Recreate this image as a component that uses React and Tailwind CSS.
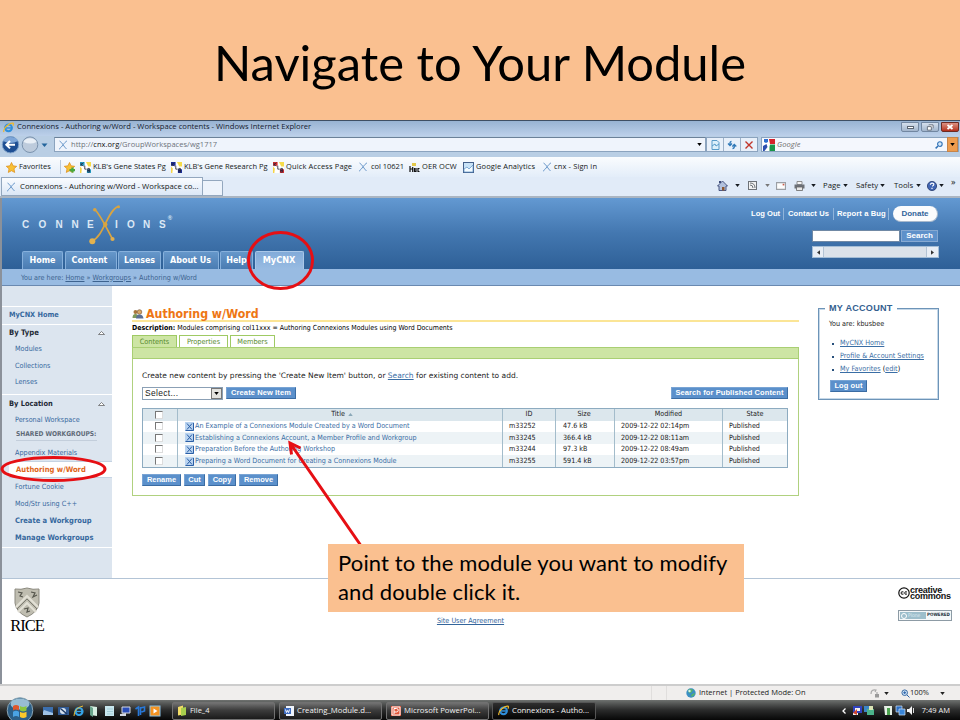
import React from "react";

function Arrow({ className = "" }) {
  return (
    <svg viewBox="0 0 6 4" className={"h-[3px] w-[5px] shrink-0 " + className}>
      <path d="M0 0h6L3 4z" fill="currentColor" />
    </svg>
  );
}

function IeIcon({ className = "" }) {
  return (
    <svg viewBox="0 0 12 12" className={"shrink-0 " + className}>
      <circle cx="6" cy="6.4" r="3.7" fill="none" stroke="#2f8fdc" strokeWidth="2.2" />
      <path d="M3 6.5h7" stroke="#2f8fdc" strokeWidth="1.6" />
      <path d="M1 11C-.5 7 7 .5 11 1.3c.8.6.3 1.8-.3 2.600" fill="none" stroke="#efb92c" strokeWidth="1.3" />
    </svg>
  );
}

function MiniX({ className = "" }) {
  return (
    <svg viewBox="0 0 10 10" className={"h-[10px] w-[10px] shrink-0 " + className}>
      <path d="M1.500 1C4 2 6 7 8.500 9M9 .8C6 2.500 4 7 1 9.300" fill="none" stroke="#6d9acb" strokeWidth="1" />
    </svg>
  );
}

function Star({ plus }) {
  return (
    <svg viewBox="0 0 12 12" className="h-[11px] w-[11px] shrink-0">
      <path d="M6 .5l1.700 3.700 4 .5-3 2.700.8 4L6 9.500l-3.500 1.900.8-4-3-2.700 4-.5z" fill="#f8c135" stroke="#dd8d1c" strokeWidth=".8" />
      {plus && <path d="M6 7.500h2V6h2.500v1.500H12V10h-1.500v1.500H8V10H6z" fill="#4aa83c" />}
    </svg>
  );
}

function Klb({ color }) {
  return (
    <svg viewBox="0 0 12 12" className="h-[11px] w-[11px] shrink-0">
      <rect width="12" height="12" fill="#fff" />
      <path d="M0 0h5v4H0zM7.500 8H12v4H7.500z" fill={color} />
      <path d="M6.500 0h5.500v5H9z" fill="#f6dc4a" />
      <path d="M0 5l2 2-.5 5H0z" fill="#f6d548" />
      <path d="M1.200 .8v3.700M3.800.8L1.500 2.700 3.800 4.500M5.200 4v3.800h2M8.500 7v4h2V9h-2 1.800V7z" fill="none" stroke="#23233c" strokeWidth=".9" />
    </svg>
  );
}

function TitleBar() {
  return (
    <div className="flex h-[16px] items-center border-t border-[#3f4f63] bg-linear-to-b from-[#98b3d2] to-[#bcd0ea] pl-[3px] text-[7.65px] text-[#15202e]">
      <IeIcon className="mb-[2px] h-[11px] w-[11px]" />
      <span className="mb-[3px] ml-[3px] grow whitespace-nowrap">Connexions - Authoring w/Word - Workspace contents - Windows Internet Explorer</span>
      <div className="mb-[3px] flex h-[10px] gap-[2px] pr-px">
        <div className="flex w-[18px] items-center justify-center rounded-b-[2px] border border-[#7287a1] bg-linear-to-b from-[#d5e0ed] to-[#a2b5cc]">
          <div className="h-[3px] w-[7px] border border-[#5b6572] bg-white" />
        </div>
        <div className="flex w-[18px] items-center justify-center rounded-b-[2px] border border-[#7287a1] bg-linear-to-b from-[#d5e0ed] to-[#a2b5cc]">
          <svg viewBox="0 0 8 8" className="h-[7px] w-[8px]">
            <path d="M2.500 1h5v4M1 3h4.500v4H1z" fill="#fff" stroke="#5b6572" />
          </svg>
        </div>
        <div className="flex w-[18px] items-center justify-center rounded-b-[2px] border border-[#6e2a22] bg-linear-to-b from-[#dc9082] to-[#b42d18]">
          <svg viewBox="0 0 8 6" className="h-[6px] w-[8px]">
            <path d="M1.500 1l5 4M6.500 1l-5 4" stroke="#fff" strokeWidth="1.800" />
          </svg>
        </div>
      </div>
    </div>
  );
}

function AddressBar() {
  return (
    <div className="flex h-[21px] items-center bg-[#b9cee4] pb-[4px] text-[7.5px]">
      <svg viewBox="0 0 50 18" className="h-[18px] w-[50px] shrink-0">
        <circle cx="10.500" cy="8.700" r="8.200" fill="#1f4f93" stroke="#7da0c8" />
        <path d="M3 5a8 6 0 0 1 15 0q-7 4-15 0" fill="#7ea6d8" />
        <path d="M15 8.700H7M10 5L6.300 8.700 10 12.400" fill="none" stroke="#fff" strokeWidth="2" />
        <circle cx="30" cy="8.700" r="7.800" fill="#bdcbdc" stroke="#7b93ae" />
        <path d="M23.500 6a7 6 0 0 1 13 0q-6 3-13 0" fill="#e9eff6" />
        <path d="M41.500 7.500h6l-3 3.500z" fill="#24659c" />
      </svg>
      <div className="ml-[4px] flex h-[15px] w-[652px] shrink-0 items-center border border-[#8ba3be] border-t-[#6b8199] bg-[#eff4fc]">
        <MiniX className="ml-[3px]" />
        <span className="ml-[3px] grow tracking-[0.04px] whitespace-nowrap text-[#6d737b]">http://<span className="text-[#111]">cnx.org</span>/GroupWorkspaces/wg1717</span>
        <Arrow className="mr-[3px] text-black" />
      </div>
      {/* compatibility view, refresh and stop buttons */}
      <div className="flex h-[15px] w-[52px] shrink-0 border border-[#8ba3be] bg-[#e8f0fa]">
        <div className="flex w-[17px] items-center justify-center border-r border-[#9eb2c9]">
          <svg viewBox="0 0 9 10" className="h-[10px] w-[9px]">
            <path d="M1 .5h5l2 2v7H1z" fill="#dcf0fb" stroke="#589bc8" />
            <path d="M1 6l3-2 1 2 3-2" fill="none" stroke="#589bc8" />
          </svg>
        </div>
        <div className="flex w-[17px] items-center justify-center border-r border-[#9eb2c9]">
          <svg viewBox="0 0 10 10" className="h-[10px] w-[10px]">
            <path d="M4.500 1.500Q3 1.500 3 3v2M1 3.500l2 2 2-2M5.500 8.500q1.800 0 1.800-2V5M5.300 6.500l2-2 2 2" fill="none" stroke="#2e78b8" strokeWidth="1.300" />
          </svg>
        </div>
        <div className="flex grow items-center justify-center">
          <svg viewBox="0 0 8 8" className="h-[8px] w-[8px]">
            <path d="M.5.5l7 7M7.500.5l-7 7" stroke="#c1352b" strokeWidth="1.400" />
          </svg>
        </div>
      </div>
      <div className="ml-[3px] flex h-[15px] w-[198px] items-center border border-[#8ba3be] bg-[#f4f7fd]">
        <svg viewBox="0 0 12 12" className="ml-px h-[12px] w-[12px]">
          <rect width="12" height="12" fill="#fff" />
          <path d="M1 0h4v3L3 4 1 3z" fill="#2d6fd0" />
          <path d="M6 0h6v5H7z" fill="#d3222a" />
          <path d="M7 5.500h5V12H6.500V8z" fill="#18954a" />
          <path d="M0 7l3.500-2 1 3-3 4H0z" fill="#2d4fb0" />
        </svg>
        <span className="ml-[2px] grow text-[7.5px] tracking-[0.1px] text-[#6e6e6e] italic">Google</span>
        <svg viewBox="0 0 9 9" className="mr-[4px] h-[8px] w-[8px]">
          <circle cx="5.500" cy="3.500" r="2.600" fill="#d5e8fa" stroke="#2f71b5" strokeWidth="1.200" />
          <path d="M3.500 5.500L.7 8.300" stroke="#2f71b5" strokeWidth="1.600" />
        </svg>
        <div className="flex h-[15px] w-[11px] items-center justify-center border border-[#c78448] bg-[#ee9c4e]">
          <Arrow className="text-black" />
        </div>
      </div>
    </div>
  );
}

function Favorites() {
  return (
    <div className="flex h-[20px] items-center bg-linear-to-b from-[#fafcfe] to-[#e3edf9] pl-[6px] text-[7.5px] whitespace-nowrap text-[#161a20]">
      <Star />
      <span className="ml-[2px] w-[41px]">Favorites</span>
      <div className="mr-[3px] h-[14px] w-px bg-[#b9c9dc]" />
      <Star plus />
      <div className="ml-[5px] flex w-[91px] items-center gap-[2px]"><Klb color="#24a0c8" /><span>KLB's Gene States Pg</span></div>
      <div className="flex w-[102px] items-center gap-[2px]"><Klb color="#1c2f9c" /><span>KLB's Gene Research Pg</span></div>
      <div className="flex w-[85px] items-center gap-[2px]"><Klb color="#d93030" /><span className="tracking-[0.13px]">Quick Access Page</span></div>
      <div className="flex w-[51px] items-center"><MiniX /><span className="ml-[3px] tracking-[-0.05px]">col 10621</span></div>
      <div className="flex w-[54px] items-center">
        <svg viewBox="0 0 11 9" className="h-[9px] w-[11px] shrink-0">
          <path d="M3 0h4v3H3z" fill="#e3c94b" />
          <path d="M1 3v6M1 6h2.500M3.700 4v5M5.500 5v3.500h1.500V5M10.500 5.500H9V8.500h1.500" fill="none" stroke="#111" strokeWidth="1.200" />
        </svg>
        <span className="ml-[2px] tracking-[0.1px]">OER OCW</span>
      </div>
      <div className="flex w-[79px] items-center">
        <svg viewBox="0 0 11 11" className="h-[11px] w-[11px] shrink-0">
          <rect x=".5" y=".5" width="10" height="10" fill="#c9e3f7" stroke="#44608a" />
          <path d="M1 7l3-2 2 2 4-4v7H1z" fill="#f4fbff" stroke="#5a8fc4" strokeWidth=".7" />
        </svg>
        <span className="ml-[2px] tracking-[0.1px]">Google Analytics</span>
      </div>
      <MiniX />
      <span className="ml-[2px] tracking-[0.12px]">cnx - Sign in</span>
    </div>
  );
}

function TabRow() {
  return (
    <div className="flex h-[21px] items-center border-b-2 border-[#aab5c2] bg-[#e1ebf8] text-[7.5px] whitespace-nowrap text-[#161a20]">
      <div className="ml-px flex h-[19px] w-[202px] items-center border border-[#93a7be] bg-linear-to-b from-[#fafcff] to-[#dbe7f6] pl-[4px]">
        <MiniX />
        <span className="ml-[4px] text-[7.75px]">Connexions - Authoring w/Word - Workspace co...</span>
      </div>
      <div className="mt-[3px] h-[16px] w-[20px] rounded-tr-[2px] border border-l-0 border-[#93a7be] bg-[#edf3fb]" />
      <div className="flex grow items-center pb-[2px] pl-[494px]">
        <svg viewBox="0 0 11 11" className="h-[11px] w-[11px]">
          <path d="M.5 6L5.500 1l5 5H9v4.500H2V6z" fill="#b2c1dd" stroke="#3c4a78" strokeWidth=".9" />
          <path d="M2 1h2v2H2z" fill="#3c4a78" />
          <path d="M5 7h2.500v3.500H5z" fill="#8c5730" />
        </svg>
        <Arrow className="ml-[7px]" />
        <svg viewBox="0 0 9 9" className="ml-[8px] h-[9px] w-[9px]">
          <rect x=".5" y=".5" width="8" height="8" fill="#f1f1f1" stroke="#6d7278" />
          <path d="M2 4q3 0 3 3M2 2q5 0 5 5" fill="none" stroke="#6d7278" />
        </svg>
        <Arrow className="ml-[8px] text-[#777]" />
        <svg viewBox="0 0 9 7" className="ml-[6px] h-[8px] w-[10px]">
          <path d="M.5.5h8v6h-8z" fill="#fdfdfd" stroke="#9b9fa5" />
          <path d="M6 1.500h1.500V3H6z" fill="#c85b4a" />
        </svg>
        <svg viewBox="0 0 11 10" className="ml-[8px] h-[10px] w-[11px]">
          <path d="M3 .5h5v3H3z" fill="#f5f5f5" stroke="#777" strokeWidth=".8" />
          <path d="M.5 3.500h10v4H.5z" fill="#6c7077" />
          <path d="M2.500 6h6v3.500h-6z" fill="#e8e8e8" stroke="#666" strokeWidth=".8" />
        </svg>
        <Arrow className="ml-[6px]" />
        <span className="ml-[7px] w-[20px] text-[7.75px]">Page</span><Arrow />
        <span className="ml-[8px] w-[24px] text-[7.75px]">Safety</span><Arrow />
        <span className="ml-[9px] w-[22px] text-[7.75px]">Tools</span><Arrow />
        <svg viewBox="0 0 10 10" className="ml-[6px] h-[10px] w-[10px]">
          <circle cx="5" cy="5" r="4.600" fill="#4166b4" stroke="#25396b" strokeWidth=".8" />
          <path d="M3.400 3.800q0-1.600 1.700-1.600t1.700 1.300q0 1.100-1.700 1.800M5 6.800v1.200" fill="none" stroke="#fff" strokeWidth="1.200" />
        </svg>
        <Arrow className="ml-[2px]" />
        <span className="mb-[9px] ml-[7px] text-[9px] leading-[9px]">»</span>
      </div>
    </div>
  );
}

const navTab = "flex h-[18px] items-center justify-center rounded-t-[2px] border-x border-t border-[#86b0dc] bg-linear-to-b from-[#6697ca] to-[#4a7cb2] ";

function SiteHeader() {
  return (
    <div className="flex h-[71px] justify-between bg-linear-to-b from-[#6399d2] via-[#4377b0] via-50% to-[#2e6097] font-['DejaVu_Sans',sans-serif] whitespace-nowrap text-white">
      <div className="flex flex-col pl-[20px]">
        <div className="flex h-[53px] items-center font-['Liberation_Sans',sans-serif] text-[10px] font-bold text-[#dce8f5]">
          <span className="w-[16.500px]">C</span>
          <span className="w-[17px]">O</span>
          <span className="w-[16px]">N</span>
          <span className="w-[15.500px]">N</span>
          <span className="w-[2px]">E</span>
          <svg viewBox="0 0 34 40" className="h-[40px] w-[34px]">
            <path d="M6 4.500C12 11 17 22 23.500 34M29 1.500C18 6 15 31 3 36" fill="none" stroke="#d9a440" strokeWidth="1.700" />
            <circle cx="5.800" cy="4.700" r="1.800" fill="#d9a440" />
            <circle cx="29.500" cy="1.800" r="1.500" fill="#d9a440" />
            <circle cx="23.500" cy="34" r="2.100" fill="#e0ad4c" />
            <circle cx="3.300" cy="36.300" r="3" fill="#e3b24e" />
            <circle cx="16.300" cy="19.500" r="2.200" fill="#d9a440" />
          </svg>
          <span className="-ml-[8px] w-[12px]">I</span>
          <span className="w-[16px]">O</span>
          <span className="w-[16px]">N</span>
          <span>S</span>
          <span className="mb-[12px] ml-[2px] text-[6px]">®</span>
        </div>
        <div className="flex h-[18px] gap-[1.5px] text-[8px] font-bold">
          <div className={navTab + "w-[41px]"}>Home</div>
          <div className={navTab + "w-[52px] pr-[2px]"}>Content</div>
          <div className={navTab + "w-[43px]"}>Lenses</div>
          <div className={navTab + "w-[56px]"}>About Us</div>
          <div className={navTab + "w-[33px]"}>Help</div>
          <div className="flex h-[18px] w-[49px] items-center justify-center rounded-t-[2px] border-x border-t border-[#a9c7e8] bg-linear-to-b from-[#82abd9] to-[#98bbe2] text-[8.2px]">MyCNX</div>
        </div>
      </div>
      <div className="flex w-[209px] flex-col pt-[8px] font-['Liberation_Sans',sans-serif] text-[7.6px] font-bold">
        <div className="flex h-[16px] items-center">
          <span className="w-[33px] border-r border-[#8fb4db]">Log Out</span>
          <span className="w-[50px] border-r border-[#8fb4db] pl-[4px] tracking-[0.1px]">Contact Us</span>
          <span className="w-[55px] border-r border-[#8fb4db] pl-[3px] tracking-[0.08px]">Report a Bug</span>
          <div className="ml-[4px] flex h-[16px] w-[45px] items-center justify-center rounded-full border-r border-b border-[#a8b9cd] bg-[#fbfcfd] text-[8px] text-[#33659b]">Donate</div>
        </div>
        <div className="mt-[8px] ml-[61px] flex h-[12px]">
          <div className="w-[88px] border border-[#7089a5] bg-white" />
          <div className="ml-px flex w-[37px] items-center justify-center border border-[#86a9d2] bg-[#5e91ca] text-[8px]">Search</div>
        </div>
        <div className="mt-[4px] ml-[61px] flex h-[12px] w-[127px] items-center justify-between border border-[#a3bdd6] bg-[#dbe2ea] text-[#333]">
          <div className="flex h-full w-[11px] items-center justify-center border-r border-[#b2c3d4] bg-[#e8eef5]"><Arrow className="rotate-90" /></div>
          <div className="flex h-full w-[12px] items-center justify-center border-l border-[#b2c3d4] bg-[#e8eef5]"><Arrow className="-rotate-90" /></div>
        </div>
      </div>
    </div>
  );
}

function Sidebar() {
  const link = "flex items-center pl-[13px] ";
  return (
    <div className="flex w-[110px] shrink-0 flex-col bg-[#dce5ef] text-[7.2px] whitespace-nowrap text-[#36689e]">
      <div className="h-[20px]" />
      <div className="flex h-[18px] items-center border-t border-white pl-[7px] text-[7.3px] font-bold">MyCNX Home</div>
      <div className="flex h-[17px] items-center justify-between border-t border-white pr-[7px] pl-[7px] text-[7.6px] font-bold text-[#1f2a36]">
        By Type
        <svg viewBox="0 0 7 4" className="h-[4px] w-[7px]"><path d="M.5 3.500h6l-3-3z" fill="#fff" stroke="#555" strokeWidth=".7" /></svg>
      </div>
      <div className={link + "h-[17px]"}>Modules</div>
      <div className={link + "h-[16px]"}>Collections</div>
      <div className={link + "h-[16px]"}>Lenses</div>
      <div className="mt-[4px] flex h-[18px] items-center justify-between border-t border-white pr-[7px] pl-[7px] text-[7.4px] font-bold text-[#1f2a36]">
        By Location
        <svg viewBox="0 0 7 4" className="h-[4px] w-[7px]"><path d="M.5 3.500h6l-3-3z" fill="#fff" stroke="#555" strokeWidth=".7" /></svg>
      </div>
      <div className={link + "h-[16px]"}>Personal Workspace</div>
      <div className="ml-[14px] flex h-[13px] w-[81px] items-center border-b border-[#c3cedb] pt-[2px] text-[6.6px] font-bold text-[#5e6a77]">SHARED WORKGROUPS:</div>
      <div className={link + "h-[20px] pt-[4px]"}>Appendix Materials</div>
      <div className="ml-[7px] flex h-[17px] items-center border-y border-[#c5d3e2] bg-white pl-[7px] text-[7.6px] font-bold text-[#e0661a]">Authoring w/Word</div>
      <div className={link + "h-[18px] pt-px"}>Fortune Cookie</div>
      <div className={link + "h-[16px] pt-px"}>Mod/Str using C++</div>
      <div className={link + "h-[17px] text-[7.5px] font-bold"}>Create a Workgroup</div>
      <div className={link + "h-[16px] pt-px text-[7.5px] font-bold"}>Manage Workgroups</div>
      <div className="mt-[2px] border-t border-white" />
    </div>
  );
}

const rows = [
  ["An Example of a Connexions Module Created by a Word Document", "m33252", "47.6 kB", "2009-12-22 02:14pm"],
  ["Establishing a Connexions Account, a Member Profile and Workgroup", "m33245", "366.4 kB", "2009-12-22 08:11am"],
  ["Preparation Before the Authoring Workshop", "m33244", "97.3 kB", "2009-12-22 08:49am"],
  ["Preparing a Word Document for Creating a Connexions Module", "m33255", "591.4 kB", "2009-12-22 03:57pm"],
];

function Check() {
  return <div className="ml-[12px] h-[8px] w-[8px] border border-[#dcdcdc] border-t-[#777] border-l-[#777] bg-white" />;
}

const cols = "grid grid-cols-[34px_325px_53px_59px_108px_65px] ";
const cell = "flex items-center border-l border-[#a3bccb] ";
const btn = "flex h-[12px] items-center justify-center border border-[#79a4d4] border-r-[#3b6ca3] border-b-[#3b6ca3] bg-[#5b90cb] font-['Liberation_Sans',sans-serif] text-[7.5px] font-bold text-white ";

function ContentTable() {
  return (
    <div className="mt-[8px] w-[646px] border border-[#8dabc0] text-[7.15px]">
      <div className={cols + "h-[11.500px] bg-[#dce7ed] text-[#222]"}>
        <div className="flex items-center"><Check /></div>
        <div className={cell + "justify-center gap-[3px] pl-[4px]"}>Title <Arrow className="rotate-180 text-[#8aa8b8]" /></div>
        <div className={cell + "justify-center"}>ID</div>
        <div className={cell + "justify-center pr-[2px]"}>Size</div>
        <div className={cell + "justify-center"}>Modified</div>
        <div className={cell + "justify-center"}>State</div>
      </div>
      {rows.map((r, i) => (
        <div key={r[1]} className={cols + "h-[11.600px] text-[#1a1a1a] " + (i % 2 ? "bg-[#edf3f6]" : "bg-white")}>
          <div className="flex items-center"><Check /></div>
          <div className={cell + "pl-[7px] text-[#3a6ea5]"}>
            <svg viewBox="0 0 9 9" className="mr-px h-[9px] w-[9px] shrink-0">
              <rect width="9" height="9" fill="#b9d3f0" />
              <path d="M2 1.500l5 6M7 1.500l-5 6M.5 8.500h8V1" fill="none" stroke="#2b5fa6" />
            </svg>
            <span>{r[0]}</span>
          </div>
          <div className={cell + "pl-[6px]"}>{r[1]}</div>
          <div className={cell + "pl-[7px]"}>{r[2]}</div>
          <div className={cell + "pl-[6px]"}>{r[3]}</div>
          <div className={cell + "pl-[6px]"}>Published</div>
        </div>
      ))}
    </div>
  );
}

function Workspace() {
  return (
    <div className="ml-[20px] flex w-[667px] shrink-0 flex-col whitespace-nowrap">
      <div className="flex h-[36px] items-end border-b-2 border-[#fbe596]">
        <svg viewBox="0 0 12 10" className="mb-px h-[10px] w-[12px]">
          <circle cx="3.500" cy="3" r="2" fill="#a8763c" />
          <path d="M.5 9q0-4 3-4t3 4z" fill="#7f9a5c" />
          <circle cx="7.500" cy="3" r="2.300" fill="#d8a868" stroke="#6d4a28" strokeWidth=".6" />
          <path d="M4 9.500q0-4 3.500-4t4 4z" fill="#5b6f94" />
        </svg>
        <h1 className="ml-[2px] text-[12.25px] leading-[12px] font-bold text-[#ee7614]">Authoring w/Word</h1>
      </div>
      <p className="h-[13px] text-[7px] leading-[13px] text-black"><b>Description:</b> Modules comprising col11xxx = Authoring Connexions Modules using Word Documents</p>
      <div className="flex h-[12px] gap-[2px] text-[7.3px] text-[#578a2e]">
        <div className="flex w-[45px] items-center justify-center border border-b-0 border-[#9fca64] bg-[#cde5a4] pt-px">Contents</div>
        <div className="flex w-[49px] items-center justify-center border border-b-0 border-[#9fca64] pt-px">Properties</div>
        <div className="flex w-[45px] items-center justify-center border border-b-0 border-[#9fca64] pt-px">Members</div>
      </div>
      <div className="h-[12px] border border-[#a9cf73] bg-[#cde5a4]" />
      <div className="flex h-[137px] flex-col border border-t-0 border-[#b0d17f] pl-[9px]">
        <p className="mt-[11px] h-[11px] font-['DejaVu_Sans',sans-serif] text-[7.5px] leading-[11px] text-[#222]">Create new content by pressing the 'Create New Item' button, or <span className="text-[#3a6ea5] underline">Search</span> for existing content to add.</p>
        <div className="mt-[6px] flex h-[13px] w-[646px] items-start">
          <div className="flex h-[13px] w-[81px] items-center justify-between border border-[#8ba0b5] bg-white pl-[2px] font-['Liberation_Sans',sans-serif] text-[8.500px] tracking-[0.3px] text-[#222]">
            Select...
            <div className="flex h-[11px] w-[11px] items-center justify-center border border-[#777] bg-[#e3e3e0]"><Arrow className="text-black" /></div>
          </div>
          <div className={btn + "ml-[3px] w-[70px] tracking-[0.1px]"}>Create New Item</div>
          <div className={btn + "ml-auto w-[117px] tracking-[0.1px]"}>Search for Published Content</div>
        </div>
        <ContentTable />
        <div className="mt-[6px] flex gap-[3px]">
          <div className={btn + "w-[39px]"}>Rename</div>
          <div className={btn + "w-[21px]"}>Cut</div>
          <div className={btn + "w-[28px]"}>Copy</div>
          <div className={btn + "w-[39px]"}>Remove</div>
        </div>
      </div>
    </div>
  );
}

function Account() {
  return (
    <fieldset className="mt-[17px] ml-[19px] flex h-[97px] w-[121px] shrink-0 flex-col border border-[#6d94b8] px-[10px] text-[7.2px] whitespace-nowrap text-[#222] ring-1 ring-[#c6d8e8] ring-inset">
      <legend className="ml-[-4px] bg-white px-[4px] font-['Liberation_Sans',sans-serif] text-[9.1px] leading-[10px] font-bold tracking-[0.25px] text-[#33608f]">MY ACCOUNT</legend>
      <div className="mt-[6px] leading-[10px]">You are: kbusbee</div>
      <ul className="mt-[8px] ml-[3px] flex flex-col text-[#3a6ea5]">
        <li className="flex h-[13px] items-center gap-[6px]"><i className="h-[2px] w-[2px] bg-[#28507c]" /><u>MyCNX Home</u></li>
        <li className="flex h-[13px] items-center gap-[6px]"><i className="h-[2px] w-[2px] bg-[#28507c]" /><u>Profile &amp; Account Settings</u></li>
        <li className="flex h-[13px] items-center gap-[6px]"><i className="h-[2px] w-[2px] bg-[#28507c]" /><span><u>My Favorites</u> <span className="text-black">(</span><u>edit</u><span className="text-black">)</span></span></li>
      </ul>
      <div className={btn + "mt-[4px] ml-px w-[37px] tracking-[0.1px]"}>Log out</div>
    </fieldset>
  );
}

function Footer() {
  return (
    <div className="flex h-[106px] justify-between border-t border-[#b3c4d6] bg-white pr-[8px] pl-[8px]">
      <div className="flex w-[34px] flex-col items-center pt-[8px]">
        <svg viewBox="0 0 26 31" className="h-[31px] w-[26px]">
          <path d="M1 2q6 1 12-1 6 2 12 1v14q-1 9-12 14Q2 25 1 16z" fill="#bfbdb0" stroke="#8b897e" />
          <path d="M2 20L13 9l11 11M4 25l9-9 9 9" fill="none" stroke="#e3e1d6" strokeWidth="2" />
          <path d="M3 22L13 12l10 10" fill="none" stroke="#6b6a61" strokeWidth=".8" />
          <path d="M4 5l4 1-2 3 3 1M17 5l4 1-2 4 4-2M10 22l4-1-1 4 3-1" fill="none" stroke="#55554c" strokeWidth="1.200" />
        </svg>
        <div className="font-['Liberation_Serif',serif] text-[16.5px] leading-[15px] tracking-[-1px] text-black">RICE</div>
      </div>
      <div className="mt-[37px] mr-px h-[10px] text-[7.2px] leading-[10px] text-[#33659b] underline">Site User Agreement</div>
      <div className="flex w-[54px] flex-col pt-[8px]">
        <div className="flex items-center">
          <svg viewBox="0 0 12 12" className="h-[12px] w-[12px] shrink-0">
            <circle cx="6" cy="6" r="5.200" fill="none" stroke="#111" strokeWidth="1.200" />
            <path d="M5.500 5Q3 4 3 6t2.500 1M9 5Q6.700 4 6.700 6T9 7" fill="none" stroke="#111" strokeWidth="1" />
          </svg>
          <div className="font-['Liberation_Sans',sans-serif] text-[9px] leading-[6px] font-bold tracking-[-0.25px] text-[#111]">creative<br />commons</div>
        </div>
        <div className="mt-[11px] flex h-[11px] w-[54px] items-center border border-[#8d9ba5] bg-[#f5f8f9] p-px">
          <div className="flex h-full w-[26px] items-center bg-[#9dbecb] pl-px text-[5px] text-[#dcecf3]"><i className="mr-px h-[6px] w-[6px] rounded-full border border-white" />Plone</div>
          <span className="ml-px text-[4.500px] font-bold text-[#25333d]">POWERED</span>
        </div>
      </div>
    </div>
  );
}

function StatusBar() {
  return (
    <div className="flex h-[16px] items-center border-t-2 border-[#cdcdcd] bg-[#f0eeed] text-[7.5px] whitespace-nowrap text-[#222]">
      <div className="h-full w-[651px]" />
      <div className="h-full w-[16px] border-x border-[#e0dedd]" />
      <svg viewBox="0 0 10 10" className="ml-[19px] h-[10px] w-[10px]">
        <circle cx="5" cy="5" r="4.700" fill="#3b8fc2" />
        <path d="M2 2q3-2 5 0L5 5 3 5zM5 7l3-2 1 1-3 3z" fill="#58b36a" />
        <circle cx="3.500" cy="3" r="1.200" fill="#d5f0ee" />
      </svg>
      <span className="ml-[3px] w-[171px]">Internet | Protected Mode: On</span>
      <svg viewBox="0 0 10 10" className="h-[10px] w-[10px]">
        <path d="M1 6q0-5 5-4L5 4M7 4v2" fill="none" stroke="#aaa" strokeWidth="1.200" />
        <rect x="5" y="6" width="4" height="3.500" fill="#9a9a9a" />
      </svg>
      <Arrow className="ml-[4px]" />
      <svg viewBox="0 0 9 9" className="ml-[12px] h-[9px] w-[9px]">
        <circle cx="3.700" cy="3.700" r="2.800" fill="#cfe4f8" stroke="#3a6aa3" />
        <path d="M2.300 3.700h2.800M3.700 2.300v2.800M6 6l2.500 2.500" stroke="#2a62a8" strokeWidth="1" />
      </svg>
      <span className="w-[30px]">100%</span>
      <Arrow />
    </div>
  );
}

const task = "ml-[4px] flex h-[18px] w-[103px] items-center gap-[3px] rounded-[2px] border border-[#717171] bg-linear-to-b from-[#727272] via-[#3c3c3c] via-45% to-[#1b1b1b] pl-[4px] ";

function Taskbar() {
  return (
    <div className="flex h-[21px] items-center bg-linear-to-b from-[#6e716f] via-[#2d2e2e] via-45% to-[#050505] text-[7.5px] whitespace-nowrap text-[#f2f2f2]">
      <svg viewBox="0 0 28 24" className="-mt-[3px] ml-[6px] h-[24px] w-[28px] shrink-0">
        <circle cx="14" cy="13.500" r="12.800" fill="#2c5f87" stroke="#8aa5b5" />
        <ellipse cx="14" cy="7" rx="9.500" ry="5.500" fill="#98bdd3" />
        <path d="M7 9q3-2 6 0v4.500q-3-2-6 0z" fill="#e0572c" />
        <path d="M14 9q3 2 6.500 0V13.500q-3.500 2-6.500 0z" fill="#8cc63e" />
        <path d="M7 14.700q3-2 6 0V20q-3-2-6 0z" fill="#4ba3e3" />
        <path d="M14 14.700q3 2 6.500 0V20q-3.500 2-6.500 0z" fill="#fbc92b" />
      </svg>
      <svg viewBox="0 0 120 12" className="ml-[9px] h-[12px] w-[120px] shrink-0">
        <path d="M0 2h10v7H0z" fill="#3c6fae" /><path d="M1 5l9 3v2H0V7z" fill="#9ec2e6" />
        <path d="M15 2h11v8H15z" fill="#305a94" /><circle cx="20" cy="6" r="3" fill="#d6e2ee" /><path d="M18 4l6 5" stroke="#1f3b66" strokeWidth="1.500" />
        <circle cx="36" cy="6.500" r="3.500" fill="none" stroke="#36a4e6" strokeWidth="2.200" /><path d="M33 6.500h7" stroke="#36a4e6" strokeWidth="1.300" /><path d="M31 11q0-8 9-10" fill="none" stroke="#e8bd38" />
        <path d="M47 1l7 1v9l-7-1z" fill="#d6efe2" /><path d="M47 1l3 2v9l-3-2z" fill="#69a58c" />
        <path d="M62 1h9v10h-9z" fill="#c8e6ee" /><path d="M64 4h6M64 6.500h6M64 9h6" stroke="#a3ccd6" />
        <path d="M79 2h8v6h-8z" fill="#2a4db8" stroke="#d5d9e2" /><path d="M77 9l6-1v3h-6z" fill="#d5d9e2" />
        <path d="M92.500 4l3-2v9M97.500 2v8M97.500 3l4-1v4l-3 1" fill="none" stroke="#2878d8" strokeWidth="1.600" />
        <rect x="107" y="1" width="10" height="10" fill="#f39322" stroke="#8bc3e8" /><path d="M110.500 3.500v5l4-2.500z" fill="#fff" />
      </svg>
      <div className={task + "ml-[9px]"}>
        <svg viewBox="0 0 10 11" className="h-[11px] w-[10px]"><path d="M1 2l5-1.500v9L1 10.500z" fill="#f3dd66" /><path d="M4 3l5-1v8l-5 1z" fill="#a9cf4d" /></svg>
        File_4
      </div>
      <div className={task}>
        <svg viewBox="0 0 10 10" className="h-[10px] w-[10px]"><path d="M2 0h8v10H2z" fill="#eef3fb" /><path d="M0 2h7v6H0z" fill="#3e6cc0" /><path d="M1.500 3.500l1 3 1-2 1 2 1-3" fill="none" stroke="#fff" /></svg>
        <span className="text-[7.75px]">Creating_Module.d...</span>
      </div>
      <div className={task}>
        <svg viewBox="0 0 10 10" className="h-[10px] w-[10px]"><path d="M0 0h10v10H0z" fill="#e2573a" /><path d="M3 8V2.500h2.500a1.700 1.700 0 0 1 0 3.500H3M1 1h8v8H1z" fill="none" stroke="#fff" strokeWidth="1" /></svg>
        <span className="text-[7.75px]">Microsoft PowerPoi...</span>
      </div>
      <div className="ml-[3px] flex h-[18px] w-[104px] items-center gap-[3px] rounded-[2px] border border-[#555] bg-linear-to-b from-[#2f2f2f] to-[#050505] pl-[5px]">
        <IeIcon className="h-[11px] w-[11px]" />
        <span className="text-[7.75px]">Connexions - Autho...</span>
      </div>
      <div className="ml-auto flex items-center pr-[10px]">
        <svg viewBox="0 0 4 6" className="h-[6px] w-[4px]"><path d="M3.500.5L1 3l2.500 2.500" fill="none" stroke="#fff" strokeWidth="1.300" /></svg>
        <svg viewBox="0 0 62 11" className="ml-[7px] h-[11px] w-[62px]">
          <path d="M0 1h9v7H0z" fill="#3142c0" /><path d="M2 3h5v3H2zM0 8h5v2H0z" fill="#f0f0f0" /><path d="M0 8l4-4v6z" fill="#d3482f" />
          <path d="M11 1h6v6h-6z" fill="#3b86c8" /><path d="M14 4h7v6h-7z" fill="#4bb38a" /><path d="M16 1h4v4h-4z" fill="#d9e4b4" />
          <path d="M31 1h8v9h-7z" fill="#e6efe6" /><path d="M34 3h3v7h-3z" fill="#4ca34e" />
          <path d="M43 1h6v6h-6z" fill="#2d6fc4" stroke="#cfe0f2" strokeWidth=".7" /><path d="M46 4h6v6h-6z" fill="#3a86d8" stroke="#cfe0f2" strokeWidth=".7" />
          <path d="M54 4h2l3-3v9l-3-3h-2z" fill="#f5f5f5" /><path d="M60.500 3v5" stroke="#ddd" />
        </svg>
        <span className="ml-[7px]">7:49 AM</span>
      </div>
    </div>
  );
}

export default function App() {
  return (
    <div className="relative h-[720px] w-[960px] overflow-hidden bg-white font-['Open_Sans',sans-serif]">
      <div className="flex h-[120px] items-center justify-center bg-[#fac090] pt-[5px] font-['Lato',sans-serif] text-[48.9px] whitespace-nowrap text-black">Navigate to Your Module</div>
      <TitleBar />
      <AddressBar />
      <Favorites />
      <TabRow />
      <div className="flex flex-col border-l-2 border-[#8b919a] font-['DejaVu_Sans_Condensed','DejaVu_Sans',sans-serif]">
        <SiteHeader />
        <div className="flex h-[17px] items-center border-b border-[#6a89b0] bg-[#98bbe2] pt-[2px] pl-[19px] text-[7.2px] whitespace-nowrap text-[#3d638f]"><span>You are here: <u>Home</u> » <u>Workgroups</u> » Authoring w/Word</span></div>
        <div className="flex h-[292px] bg-white">
          <Sidebar />
          <Workspace />
          <Account />
        </div>
        <Footer />
      </div>
      <StatusBar />
      <Taskbar />

      {/* slide annotations lying over the browser window */}
      <svg viewBox="0 0 960 720" className="pointer-events-none absolute inset-0 h-[720px] w-[960px]">
        <ellipse cx="280.500" cy="260.500" rx="32" ry="28" fill="none" stroke="#e60f14" strokeWidth="3" />
        <ellipse cx="53.500" cy="469" rx="51.500" ry="11.500" fill="none" stroke="#e60f14" strokeWidth="3" />
        <path d="M360.500 545L290 443M291.500 454.500L290 443L300.500 448" fill="none" stroke="#e60f14" strokeWidth="3" />
      </svg>
      <div className="absolute top-[544px] left-[328px] flex h-[68px] w-[416px] items-center bg-[#fac090] pb-[2px] pl-[10px] font-['Lato',sans-serif] text-[22px] leading-[29px] tracking-[0.14px] whitespace-nowrap text-black">
        <p>Point to the module you want to modify<br />and double click it.</p>
      </div>
    </div>
  );
}
